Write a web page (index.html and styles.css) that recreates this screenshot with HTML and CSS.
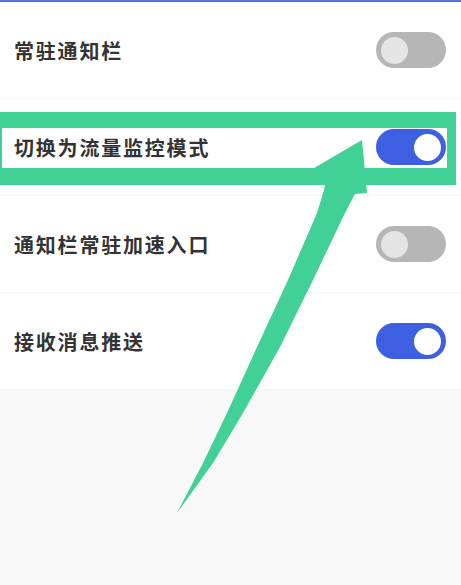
FILE: index.html
```html
<!DOCTYPE html>
<html lang="zh-CN">
<head>
<meta charset="utf-8">
<title>设置</title>
<link rel="stylesheet" href="styles.css">
</head>
<body>
<div class="screen">
  <div class="top-bar"></div>
  <ul class="settings">
    <li class="row">
      <span class="label">常驻通知栏</span>
      <span class="switch"><span class="knob"></span></span>
    </li>
    <li class="row">
      <span class="label">切换为流量监控模式</span>
      <span class="switch on"><span class="knob"></span></span>
    </li>
    <li class="row">
      <span class="label">通知栏常驻加速入口</span>
      <span class="switch"><span class="knob"></span></span>
    </li>
    <li class="row">
      <span class="label">接收消息推送</span>
      <span class="switch on"><span class="knob"></span></span>
    </li>
  </ul>
  <div class="rest"></div>

  <!-- highlight frame around the traffic-monitor row -->
  <div class="highlight"></div>
  <!-- pointer arrow -->
  <svg class="pointer" width="461" height="585" viewBox="0 0 461 585">
    <polygon fill="#41d096" points="362,140 367,193 355,194 345,213 313,280 280,347 243,413 213,463 177,513 203,463 227,413 257,347 288,280 317,213 324,190 325,184 297,178"/>
  </svg>
</div>
</body>
</html>
```

FILE: styles.css
```css
* { box-sizing: border-box; }
html, body {
  margin: 0;
  padding: 0;
  background: #ffffff;
}
.screen {
  position: relative;
  width: 461px;
  height: 585px;
  overflow: hidden;
  display: flex;
  flex-direction: column;
  font-family: "Noto Sans CJK SC", "Noto Sans", sans-serif;
}
.top-bar {
  height: 2px;
  background: #4f72d9;
  flex: none;
}
.settings {
  list-style: none;
  margin: 0;
  padding: 0;
  background: #ffffff;
  flex: none;
}
.row {
  height: 97px;
  display: flex;
  align-items: center;
  justify-content: space-between;
  padding: 0 15px 0 14px;
  border-bottom: 1px solid #f6f6f6;
}
.label {
  font-size: 20px;
  font-weight: 700;
  color: #333333;
  letter-spacing: 1.8px;
}
.switch {
  width: 70px;
  height: 36px;
  border-radius: 18px;
  background: #b6b6b6;
  display: flex;
  align-items: center;
  padding: 0 5px;
}
.switch .knob {
  width: 27px;
  height: 27px;
  border-radius: 50%;
  background: #e4e4e4;
}
.switch.on {
  background: #3d5fe2;
  justify-content: flex-end;
}
.switch.on .knob {
  background: #ffffff;
}
.rest {
  flex: 1;
  background: #f8f8f8;
}
.highlight {
  position: absolute;
  left: 0;
  top: 112px;
  width: 456px;
  height: 73px;
  border-style: solid;
  border-color: #41d096;
  border-width: 16px 9px 17px 2px;
}
.pointer {
  position: absolute;
  left: 0;
  top: 0;
}
```
